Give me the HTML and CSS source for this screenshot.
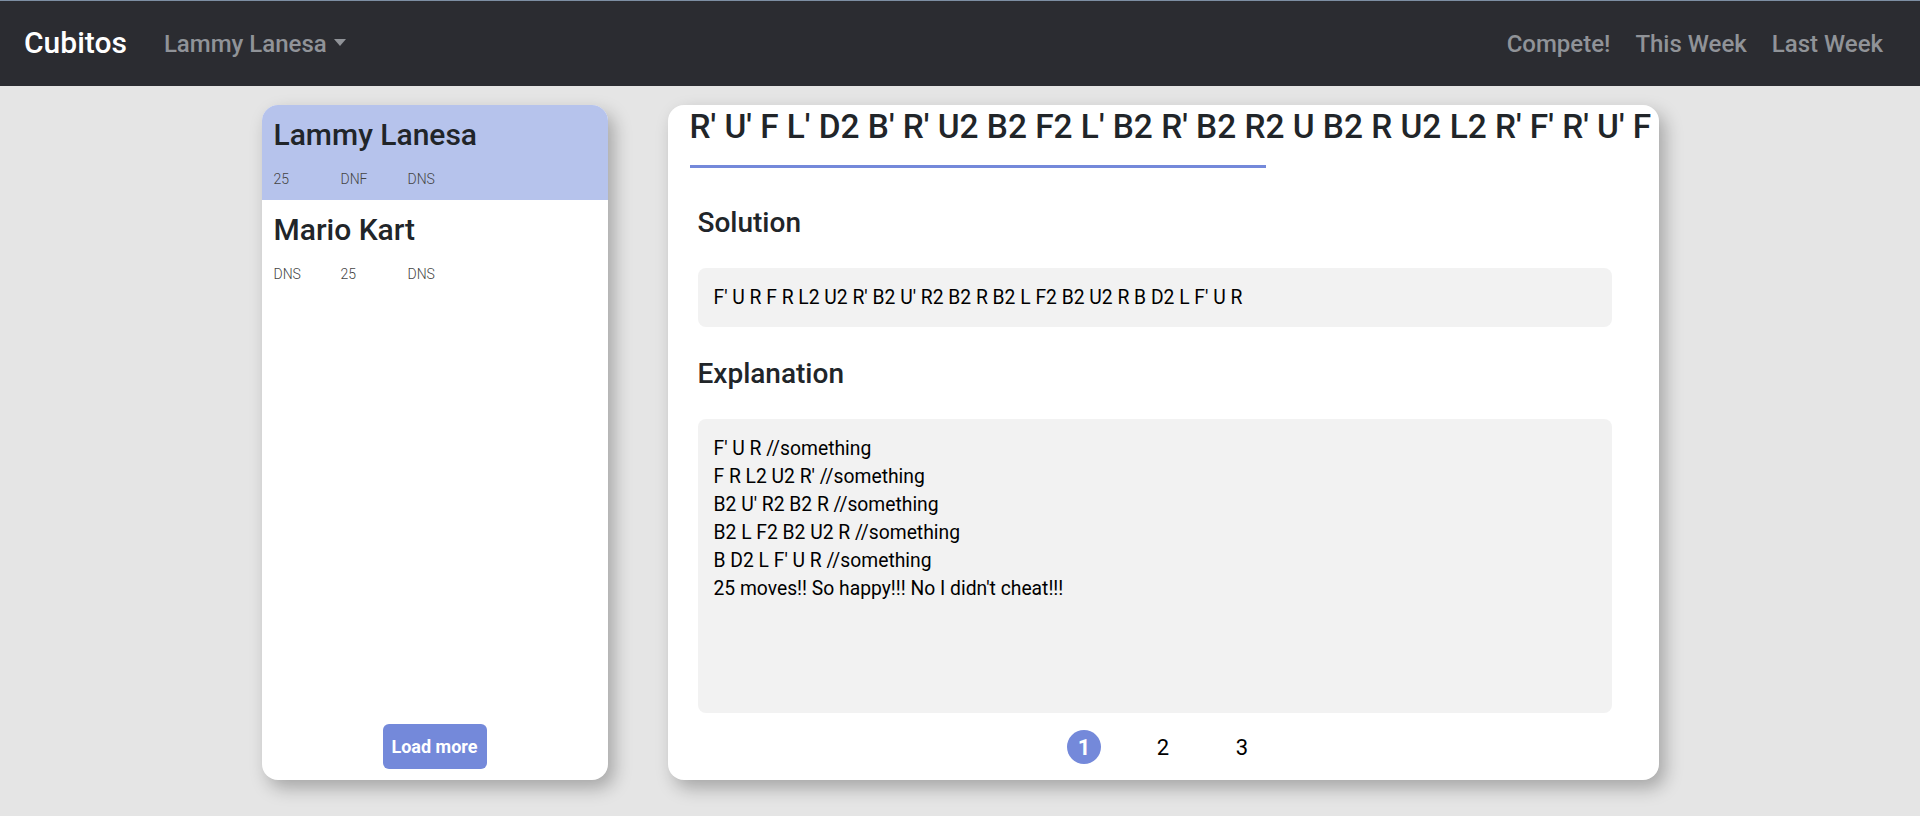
FILE: index.html
```html
<!DOCTYPE html>
<html lang="en">
<head>
<meta charset="utf-8">
<title>Cubitos</title>
<link rel="stylesheet" href="styles.css">
</head>
<body>
<nav class="navbar">
  <div class="nav-left">
    <a class="brand">Cubitos</a>
    <a class="nav-link dropdown">Lammy Lanesa<span class="caret"></span></a>
  </div>
  <div class="nav-right">
    <a class="nav-link">Compete!</a>
    <a class="nav-link">This Week</a>
    <a class="nav-link">Last Week</a>
  </div>
</nav>
<main class="layout">
  <aside class="card side-card">
    <ul class="results">
      <li class="result active">
        <h2 class="result-name">Lammy Lanesa</h2>
        <div class="stats"><span>25</span><span>DNF</span><span>DNS</span></div>
      </li>
      <li class="result">
        <h2 class="result-name">Mario Kart</h2>
        <div class="stats"><span>DNS</span><span>25</span><span>DNS</span></div>
      </li>
    </ul>
    <div class="side-footer"><button class="btn-load">Load more</button></div>
  </aside>
  <section class="card main-card">
    <div class="tabs">
      <div class="tab">R' U' F L' D2 B' R' U2 B2 F2 L' B2 R' B2 R2 U B2 R U2 L2 R' F' R' U' F</div>
      <div class="indicator"></div>
    </div>
    <div class="panel">
      <h3 class="section-title">Solution</h3>
      <div class="box solution">F' U R F R L2 U2 R' B2 U' R2 B2 R B2 L F2 B2 U2 R B D2 L F' U R</div>
      <h3 class="section-title">Explanation</h3>
      <div class="box explanation">F' U R //something<br>F R L2 U2 R' //something<br>B2 U' R2 B2 R //something<br>B2 L F2 B2 U2 R //something<br>B D2 L F' U R //something<br>25 moves!! So happy!!! No I didn't cheat!!!</div>
    </div>
    <div class="pagination">
      <span class="page current">1</span>
      <span class="page">2</span>
      <span class="page">3</span>
    </div>
  </section>
</main>
</body>
</html>
```
FILE: styles.css
```css
* { box-sizing: border-box; }
html, body { margin: 0; padding: 0; }
body {
  background: #e5e5e5;
  font-family: Roboto, "Noto Sans", "Liberation Sans", sans-serif;
  color: #212529;
  height: 816px;
  overflow: hidden;
}
.navbar {
  height: 86px;
  background: #2b2c31;
  border-top: 1px solid #7d8ea3;
  display: flex;
  align-items: center;
  justify-content: space-between;
  padding: 0 37px 0 24px;
}
.nav-left, .nav-right { display: flex; align-items: center; }
.brand {
  color: #fff;
  font-size: 30px;
  font-weight: 500;
  margin-right: 37px;
  padding-bottom: 2px;
}
.nav-link {
  color: #909398;
  font-size: 24px;
  font-weight: 500;
  display: flex;
  align-items: center;
}
.nav-right .nav-link { margin-left: 25px; }
.caret {
  display: inline-block;
  width: 0; height: 0;
  border-left: 6px solid transparent;
  border-right: 6px solid transparent;
  border-top: 7px solid #909398;
  margin-left: 7px;
  margin-top: -3px;
}
.layout {
  width: 1397px;
  margin: 19px auto 0;
  display: grid;
  grid-template-columns: 346px 1fr;
  column-gap: 60px;
  height: 675px;
}
.card {
  background: #fff;
  border-radius: 16px;
  box-shadow: 6px 8px 18px rgba(0,0,0,0.28);
  overflow: hidden;
}
.side-card { display: flex; flex-direction: column; }
.results { list-style: none; margin: 0; padding: 0; flex: 1; }
.result { padding: 11px 12px 10px; height: 95px; }
.result.active { background: #b6c3ec; }
.result-name {
  margin: 0 0 15px;
  font-size: 30px;
  line-height: 38px;
  font-weight: 500;
  color: #212529;
}
.stats { display: flex; height: 21px; line-height: 21px; font-size: 14px; font-weight: 300; color: #444; }
.stats span { width: 67px; }
.side-footer { display: flex; justify-content: center; padding-bottom: 11px; }
.btn-load {
  width: 104px; height: 45px;
  border: 0; border-radius: 6px;
  background: #7489da;
  color: #fff;
  font-family: inherit;
  font-size: 18px;
  font-weight: 700;
  padding: 0;
}
.main-card { display: flex; flex-direction: column; }
.tabs { padding: 3px 0 0 22px; }
.tab {
  font-size: 33.4px;
  font-weight: 500;
  line-height: 38px;
  white-space: nowrap;
  color: #212529;
}
.indicator { width: 576px; height: 3px; background: #7489da; margin-top: 19px; }
.panel { padding: 0 47px 0 30px; display: flex; flex-direction: column; }
.section-title {
  font-size: 28px;
  font-weight: 500;
  line-height: 34px;
  margin: 30px 0 28px;
}
.panel .section-title:first-child { margin-top: 38px; }
.box {
  background: #f2f2f2;
  border-radius: 8px;
  padding: 16px;
  font-size: 19.3px;
  font-weight: 400;
  color: #000;
}
.solution { line-height: 27px; height: 59px; }
.explanation { line-height: 28px; height: 294px; }
.pagination {
  display: flex;
  justify-content: center;
  gap: 45px;
  margin-top: 17px;
}
.page {
  width: 34px; height: 34px;
  display: flex; align-items: center; justify-content: center;
  font-size: 22px;
  color: #000;
}
.page.current { background: #7489da; color: #fff; border-radius: 50%; font-weight: 700; }
```
